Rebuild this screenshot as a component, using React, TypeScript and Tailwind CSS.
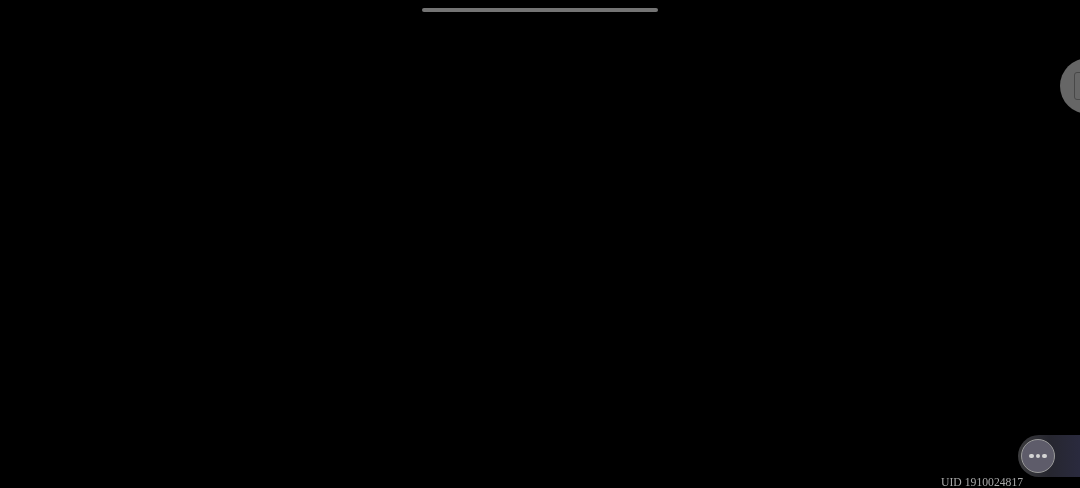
export default function App() {
  return (
    <div className="flex h-[488px] w-[1080px] flex-col overflow-hidden bg-black">
      <div className="mx-auto mt-2 h-1 w-[236px] shrink-0 rounded-full bg-[#747474]" />

      {/* floating button, mostly off the right edge */}
      <div className="mt-[46px] -mr-[36px] flex size-14 shrink-0 items-center justify-center self-end rounded-full bg-[#666666] blur-[0.4px]">
        <div className="h-7 w-7 rounded-[3px] border border-[#484848]" />
      </div>

      <div className="flex-1" />

      <div className="flex h-[42px] w-[62px] shrink-0 items-center self-end rounded-l-full bg-gradient-to-r from-[#3c3c3e] via-[#26262f] to-[#2a2a3e] pl-[3px] blur-[0.4px]">
        <div className="flex size-[34px] items-center justify-center gap-[2px] rounded-full border border-[#9a9a9a] bg-[#5e5c6a]">
          <span className="size-[4.5px] rounded-full bg-[#d4d4d4]" />
          <span className="size-[4.5px] rounded-full bg-[#d4d4d4]" />
          <span className="size-[4.5px] rounded-full bg-[#d4d4d4]" />
        </div>
      </div>

      <div className="mt-[1px] h-[10px] shrink-0 pl-[941px] font-['Liberation_Serif',serif] text-[11.7px] leading-[10px] whitespace-nowrap text-[#a8a8a8] blur-[0.3px]">
        UID 1910024817
      </div>
    </div>
  );
}
